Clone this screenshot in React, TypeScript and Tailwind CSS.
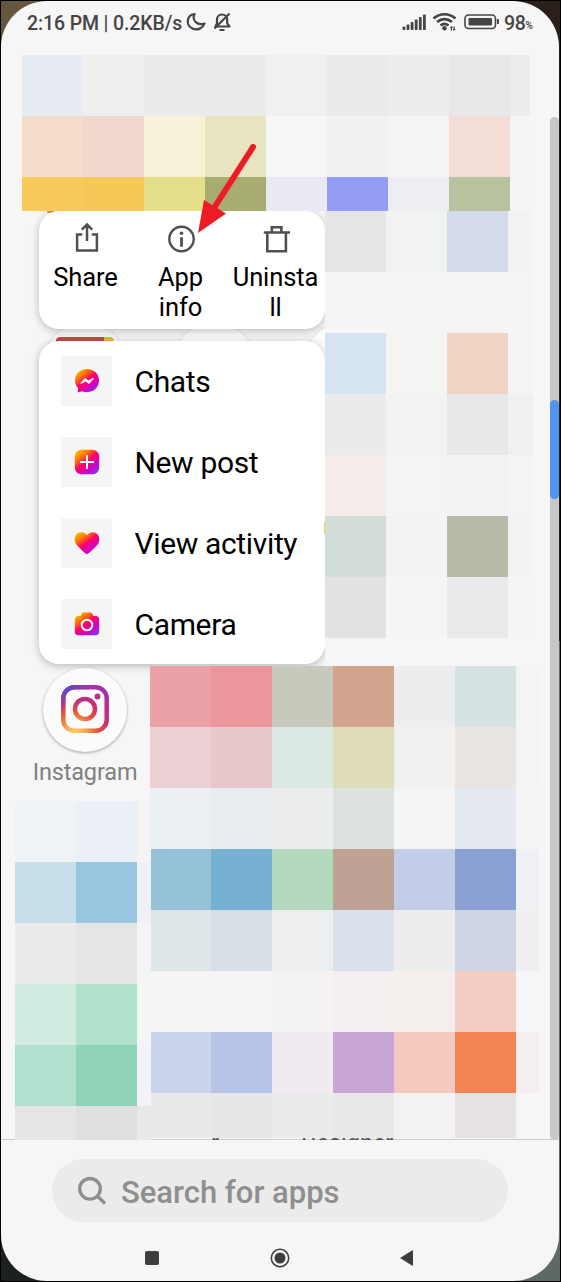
import React from 'react';

interface MosaicProps {
  rows: string[][];
  heights: string[];
  lastWidth: string;
}

// blurred-out app icons, one flat tile per 61px cell
const Mosaic: React.FC<MosaicProps> = ({ rows, heights, lastWidth }) => (
  <div className="flex flex-col">
    {rows.map((row, r) => (
      <div key={r} className={`flex ${heights[r] ?? 'h-[61px]'}`}>
        {row.map((color, c) => (
          <div
            key={c}
            className={`shrink-0 ${c === row.length - 1 ? lastWidth : 'w-[61px]'}`}
            style={{ backgroundColor: color }}
          />
        ))}
      </div>
    ))}
  </div>
);

const topTiles = [
  ['#e7ebf3', '#efefef', '#ebebeb', '#ebebeb', '#f0f0f0', '#eaeaea', '#ededed', '#e8e8e8', '#ececec'],
  ['#f4decb', '#f2d7cc', '#f7f2d7', '#e8e5c0', '#f6f6f6', '#f1f1f4', '#f4f4f4', '#f4ddd7', '#f4f4f4'],
  ['#f8ca5c', '#f6c857', '#e5df8c', '#a8ac70', '#e9eaf4', '#949df4', '#eceef2', '#b8c29e', '#f5f5f5'],
];

const rightTiles = [
  ['#e5e6e8', '#f1f3f2', '#d5dce9', '#f3f3f3'],
  ['#f5f5f5', '#f5f5f5', '#f5f5f5', '#f4f4f4'],
  ['#d6e3f0', '#f4f4f3', '#f0d5c4', '#f4f4f4'],
  ['#ebebeb', '#f2f2f2', '#e8e8e8', '#f0f0f0'],
  ['#f5ecea', '#f4f4f4', '#f0f3f2', '#f4f4f4'],
  ['#d3ddd7', '#f3f3f3', '#b8baaa', '#f3f3f3'],
  ['#e2e2e2', '#f5f5f5', '#eaeaea', '#f5f5f5'],
];

const lowerTiles = [
  ['#eca1a6', '#eb959c', '#c6c9bb', '#d2a48d', '#ededef', '#d6e1e2', '#f4f4f4'],
  ['#edd0d4', '#e7c7ca', '#dce9e2', '#dfdcb9', '#f2f1ef', '#e9e5e2', '#f4f4f4'],
  ['#ebf0f3', '#e8edf1', '#ebedec', '#dde2de', '#f5f5f5', '#e4e8f1', '#f5f5f5'],
  ['#96c2d9', '#76b0d2', '#b5d9bf', '#bea293', '#c4cde8', '#8a9fd4', '#eff0f4'],
  ['#dde5e7', '#d7dee6', '#edeef0', '#dbe1eb', '#ededed', '#ced4e4', '#efefef'],
  ['#f4f4f4', '#f2f4f6', '#f4f3f1', '#f5efef', '#f4efed', '#f4cdc3', '#f6f6f6'],
  ['#cbd3ec', '#b8c3e8', '#f0ebf0', '#c9a7d4', '#f4c9be', '#f38555', '#f5eeef'],
  ['#e9e9e9', '#e7e7e7', '#ebebeb', '#e8e8e8', '#f2f2f2', '#e8e3e3', '#f6f6f6'],
];

const leftTiles = [
  ['#eff3f6', '#eaf0f5', '#f4f4f4'],
  ['#c7deeb', '#99c6e1', '#f0f1f4'],
  ['#ebebeb', '#e5e5e5', '#f3f5f4'],
  ['#d0ece0', '#b1e2ce', '#f5f5f5'],
  ['#b1e1ce', '#90d4b8', '#f2f3f6'],
  ['#e5e5e5', '#e0e0e0', '#e9e9e9'],
];

const StatusBar = () => (
  <div className="flex h-[54px] items-start pl-[26px] text-[#454545]">
    <span className="mt-[11px] w-[156px] whitespace-nowrap text-[19.500px] leading-6 font-medium tracking-[-0.120px]">
      2:16 PM | 0.2KB/s
    </span>
    <svg className="mt-[10px] ml-[3px]" width="46" height="24" viewBox="186 11 46 24" fill="none" stroke="currentColor" strokeWidth="2.200">
      <path d="M194.500 14C186.500 15 185.500 25.500 192.500 28.500C197.500 31 203 28 204.500 23.500C197.500 26 191.500 20.500 194.500 14Z" strokeLinejoin="round" />
      <path d="M215.500 26.500H229.500L227.200 23.300V19.500C227.200 16.800 225 14.500 222 14.500C219 14.500 217 16.800 217 19.500V23.300L215.500 26.500Z" strokeLinejoin="round" />
      <path d="M229.500 13.500L214.500 28.500M219.500 30H224.500" />
    </svg>
    <svg className="mt-[10px] ml-[170px]" width="100" height="24" viewBox="402 11 100 24">
      <g fill="currentColor">
        <rect x="402.500" y="26.500" width="2.800" height="3.500" rx="0.800" />
        <rect x="406.600" y="24.500" width="2.800" height="5.500" rx="0.800" />
        <rect x="410.700" y="22" width="2.800" height="8" rx="0.800" />
        <rect x="414.800" y="19.500" width="2.800" height="10.500" rx="0.800" />
        <rect x="418.900" y="17" width="2.800" height="13" rx="0.800" />
        <rect x="423" y="14.500" width="2.800" height="15.500" rx="0.800" />
        <circle cx="444.500" cy="28.300" r="2.200" />
        <path d="M451.500 26l1.500 2h-1v2.500h-1.200V28h-1zM453.500 26.500h1.200V29h1l-1.600 2-1.600-2h1z" />
      </g>
      <g fill="none" stroke="currentColor" strokeWidth="2.600">
        <path d="M433.500 18.500C440 12.800 449 12.800 455.500 18.500" />
        <path d="M437 22C441.500 18.200 447.500 18.200 452 22" />
        <path d="M440.500 25.500C443 23.400 446 23.400 448.500 25.500" />
      </g>
      <rect x="465" y="15" width="30.500" height="13.500" rx="3.500" fill="none" stroke="currentColor" strokeWidth="1.600" />
      <rect x="468.500" y="18" width="23.500" height="7.500" rx="1" fill="currentColor" />
      <path d="M497 19h1.200q.8 0 .8.800v3.400q0 .8-.8.800H497z" fill="currentColor" />
    </svg>
    <span className="mt-[11px] ml-[2px] text-[19.500px] leading-6 font-medium tracking-[-0.300px]">98</span>
    <span className="mt-[16px] text-[10px] leading-[18px] font-medium">%</span>
  </div>
);

const ShareIcon = () => (
  <svg width="28" height="34" viewBox="0 0 28 34" fill="none" stroke="#505050" strokeWidth="2.500">
    <path d="M9.300 13.500H4.100V29.500H23.900V13.500H18.700M14 20V3.800M8.800 8.700L14 3.500L19.200 8.700" />
  </svg>
);

const InfoIcon = () => (
  <svg width="28" height="34" viewBox="0 0 28 34" fill="none" stroke="#505050">
    <circle cx="13.500" cy="18" r="12.200" strokeWidth="2.400" />
    <path d="M13.500 16.200V25.700" strokeWidth="2.800" />
    <circle cx="13.500" cy="12.200" r="1.800" fill="#505050" stroke="none" />
  </svg>
);

const TrashIcon = () => (
  <svg width="28" height="34" viewBox="0 0 28 34" fill="none" stroke="#505050" strokeWidth="2.600">
    <path d="M0.800 11.500H27M4.300 11.500V30.200H22.900V11.500M8.800 11.500V6.300H18.400V11.500" />
  </svg>
);

const actions = [
  { label: ['Share'], icon: <ShareIcon /> },
  { label: ['App', 'info'], icon: <InfoIcon /> },
  { label: ['Uninsta', 'll'], icon: <TrashIcon /> },
];

const shortcuts = [
  {
    label: 'Chats',
    icon: (
      <>
        <path d="M13 1C6 1 1 6 1 12.500C1 15.500 2.200 18 4 20L3.800 24.500L8.300 23.300C9.800 23.900 11.300 24.200 13 24.200C20 24.200 25 19.200 25 12.600C25 6 20 1 13 1Z" fill="url(#shortcut)" />
        <path d="M7 15.300L11 10.800L14.300 13.300L19 10.500L15 15.200L11.700 12.700Z" fill="#fff" stroke="#fff" strokeWidth="1.200" strokeLinejoin="round" />
      </>
    ),
  },
  {
    label: 'New post',
    icon: (
      <>
        <rect x="0.800" y="0.800" width="24.400" height="24.400" rx="6.500" fill="url(#shortcut)" />
        <path d="M13 6V20M6 13H20" stroke="#fff" strokeWidth="2" />
      </>
    ),
  },
  {
    label: 'View activity',
    icon: (
      <path d="M13 24.500C11.500 23.500 4.500 17.500 2.200 14.300C-1 9.500 1 2.200 7.300 2.200C10 2.200 12 3.700 13 5.500C14 3.700 16 2.200 18.700 2.200C25 2.200 27 9.500 23.800 14.300C21.500 17.500 14.500 23.500 13 24.500Z" fill="url(#shortcut)" />
    ),
  },
  {
    label: 'Camera',
    icon: (
      <>
        <path d="M8.500 1.500H17.500L19.500 5H21.500C24 5 25.200 6.300 25.200 8.800V20.500C25.200 23 24 24.200 21.500 24.200H4.500C2 24.200 0.800 23 0.800 20.500V8.800C0.800 6.300 2 5 4.500 5H6.500Z" fill="url(#shortcut)" />
        <circle cx="13" cy="14" r="5.300" fill="none" stroke="#fff" strokeWidth="2" />
      </>
    ),
  },
];

const AppMenu = () => (
  <div className="relative flex w-[324px] flex-col overflow-x-clip pl-[38px]">
    {/* home icons showing between the two cards */}
    <div className="absolute top-[110px] left-[38px] h-[40px] w-[286px] overflow-hidden">
      <div className="absolute top-[2px] left-[4px] h-[84px] w-[84px] rounded-full bg-[#f8f8f8] shadow-[0_0_3px_rgba(0,0,0,0.15)]" />
      <div className="absolute top-[16px] left-[17px] h-5 w-[58px] rounded-t bg-linear-to-r from-[#cb4942] from-82% to-[#ecb73c] to-82%" />
      <div className="absolute top-[2px] left-[133px] h-[84px] w-[84px] rounded-full bg-[#fbfbfb] shadow-[0_0_3px_rgba(0,0,0,0.15)]" />
      <div className="absolute top-[2px] left-[264px] h-[84px] w-[84px] rounded-full bg-[#fcfcfc] shadow-[0_0_3px_rgba(0,0,0,0.15)]" />
    </div>
    <div className="absolute top-0 left-[46px] h-[2px] w-2 rounded-full bg-[#d79a2b]" />

    <div className="relative flex h-[118px] w-[285.500px] rounded-[20px] bg-white pt-[10px] shadow-[0_2px_9px_rgba(0,0,0,0.24)]">
      {actions.map((action) => (
        <button key={action.label[0]} className="flex w-[95px] shrink-0 flex-col items-center">
          {action.icon}
          <span className="mt-[7px] -ml-[2px] text-center text-[25.500px] leading-[30px] tracking-[-0.100px] text-black">
            {action.label.map((line) => (
              <span key={line} className="block">{line}</span>
            ))}
          </span>
        </button>
      ))}
    </div>

    <div className="relative mt-[12px] flex h-[323px] w-[285.500px] flex-col rounded-[20px] bg-white shadow-[0_2px_9px_rgba(0,0,0,0.26)]">
      {shortcuts.map((item) => (
        <button key={item.label} className="flex flex-1 items-center pl-[22px]">
          <span className="flex h-[50px] w-[51px] items-center justify-center bg-[#f5f5f5]">
            <svg width="26" height="26" viewBox="0 0 26 26">
              <defs>
                <linearGradient id="shortcut" x1="0.100" y1="0" x2="0.900" y2="1">
                  <stop offset="0" stopColor="#ffc400" />
                  <stop offset="0.250" stopColor="#ff7a00" />
                  <stop offset="0.480" stopColor="#ff0169" />
                  <stop offset="0.720" stopColor="#d300c5" />
                  <stop offset="1" stopColor="#7638fa" />
                </linearGradient>
              </defs>
              {item.icon}
            </svg>
          </span>
          <span className="ml-[22.500px] pt-[2px] text-[30px] leading-9 tracking-[-0.350px] text-black">{item.label}</span>
        </button>
      ))}
    </div>
    {/* sliver of a yellow icon at the edge of the card */}
    <div className="absolute top-[311px] left-[323px] h-[12px] w-px bg-[#f5cf3e]" />
  </div>
);

const InstagramApp = () => (
  <div className="flex h-[135px] w-[168px] flex-col items-center pt-[2px]">
    <div className="flex h-[84px] w-[84px] items-center justify-center rounded-full bg-[#fbfbfb] shadow-[0_1px_3px_rgba(0,0,0,0.35)]">
      <svg className="-translate-y-px" width="50" height="50" viewBox="0 0 50 50" fill="none" strokeWidth="4.500">
        <defs>
          <radialGradient id="igWarm" gradientUnits="userSpaceOnUse" cx="15" cy="50" r="54">
            <stop offset="0" stopColor="#fbd26c" />
            <stop offset="0.200" stopColor="#f7a850" />
            <stop offset="0.420" stopColor="#e4553c" />
            <stop offset="0.650" stopColor="#c72c76" />
            <stop offset="1" stopColor="#9b33ae" />
          </radialGradient>
          <radialGradient id="igCool" gradientUnits="userSpaceOnUse" cx="5" cy="2" r="26">
            <stop offset="0" stopColor="#4a50cc" />
            <stop offset="1" stopColor="#7a3fc0" stopOpacity="0" />
          </radialGradient>
        </defs>
        {['url(#igWarm)', 'url(#igCool)'].map((paint) => (
          <g key={paint} stroke={paint}>
            <rect x="3.300" y="3.300" width="43.400" height="43.400" rx="11" />
            <circle cx="25" cy="25" r="10" />
            <circle cx="37.500" cy="12.500" r="2.900" fill={paint} stroke="none" />
          </g>
        ))}
      </svg>
    </div>
    <span className="mt-[6px] text-[23.500px] leading-7 tracking-[-0.150px] text-[#808080]">Instagram</span>
  </div>
);

const SearchBar = () => (
  <div className="mx-[51px] mt-[19px] flex h-[63px] items-center rounded-full bg-[#ebebeb] pl-[25px] text-[#8f8f8f]">
    <svg width="30" height="30" viewBox="0 0 30 30" fill="none" stroke="currentColor" strokeWidth="3.400" strokeLinecap="round">
      <circle cx="13" cy="12.800" r="10.300" />
      <path d="M20.500 20.300L27 26.500" />
    </svg>
    <span className="mt-[4px] ml-[14px] text-[31px] leading-9 font-medium whitespace-nowrap">Search for apps</span>
  </div>
);

const NavBar = () => (
  <div className="mt-[24px] flex h-6 items-center pl-[144px] text-[#3d3d3d]">
    <div className="h-[14px] w-[14px] rounded-[2px] bg-current" />
    <svg className="ml-[111px]" width="20" height="20" viewBox="0 0 20 20">
      <circle cx="10" cy="10" r="8.700" fill="none" stroke="currentColor" strokeWidth="1.500" />
      <circle cx="10" cy="10" r="5.500" fill="currentColor" />
    </svg>
    <svg className="ml-[110px]" width="14" height="18" viewBox="0 0 14 18">
      <path d="M0 9L12 1.500Q13 1 13 2V16Q13 17 12 16.500Z" fill="currentColor" />
    </svg>
  </div>
);

export default function App() {
  return (
    <div className="relative h-[1282px] w-[561px] overflow-hidden border border-black bg-[conic-gradient(#2a2019_25%,#5c6966_25%_50%,#1c2021_50%_75%,#65563f_75%)] font-['Roboto',sans-serif]">
      <div className="relative flex h-[1280px] w-[558px] flex-col overflow-hidden rounded-[46px] bg-[#f6f6f6]">
        <StatusBar />

        <div className="relative z-10 ml-[21px] h-[156px]">
          <Mosaic rows={topTiles} heights={['h-[61px]', 'h-[61px]', 'h-[34px]']} lastWidth="w-5" />
        </div>

        <div className="flex h-[455px]">
          <AppMenu />
          <Mosaic rows={rightTiles} heights={[]} lastWidth="w-[25px]" />
        </div>

        <div className="flex h-[473px]">
          <div className="relative z-10 w-[149px] shrink-0">
            <InstagramApp />
            <div className="w-[136px] translate-x-[14px]">
              <Mosaic rows={leftTiles} heights={['h-[61px]', 'h-[61px]', 'h-[61px]', 'h-[61px]', 'h-[61px]', 'h-[34px]']} lastWidth="w-[14px]" />
            </div>
          </div>
          <div className="relative">
            <Mosaic
              rows={lowerTiles}
              heights={['h-[61px]', 'h-[61px]', 'h-[61px]', 'h-[61px]', 'h-[61px]', 'h-[61px]', 'h-[61px]', 'h-[45px]']}
              lastWidth="w-[23px]"
            />
            {/* labels cut off by the search area */}
            <div className="flex h-[2px] overflow-hidden pl-[61px] text-[23.500px] leading-6 text-[#555555]">
              <span className="-mt-[7px] w-[90px]">r</span>
              <span className="-mt-[7px]">Designer</span>
            </div>
          </div>
        </div>

        <div className="h-px shrink-0 bg-[#cccccc]" />
        <SearchBar />
        <NavBar />

        {/* scroll track */}
        <div className="absolute top-[116px] right-0 h-[1023px] w-[9px] rounded-full bg-[#c6c7c9] pt-[283px]">
          <div className="h-[99px] w-[9px] rounded-full bg-[#4f94ee]" />
        </div>
      </div>

      <svg className="absolute top-[139px] left-[191px] z-20" width="72" height="100" viewBox="192 140 72 100">
        <path d="M253 147L214 208" stroke="#ed1c24" strokeWidth="6" strokeLinecap="round" />
        <path d="M198 233L204 200L226 213.500Z" fill="#ed1c24" />
      </svg>
    </div>
  );
}
